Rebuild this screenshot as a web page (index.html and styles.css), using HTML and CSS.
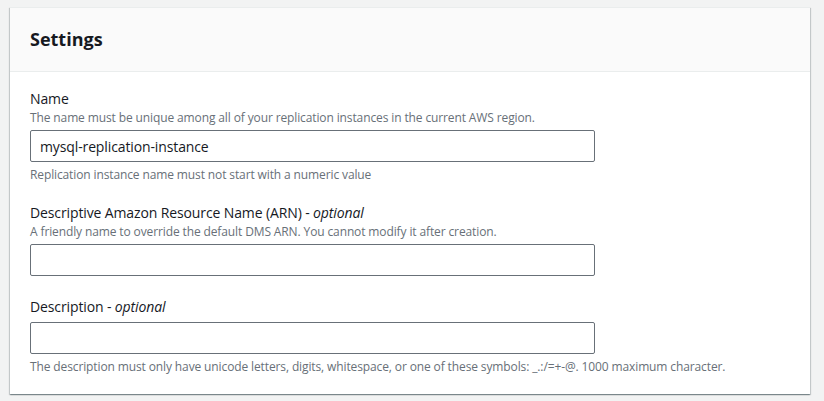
FILE: index.html
```html
<!DOCTYPE html>
<html lang="en">
<head>
<meta charset="utf-8">
<title>Settings</title>
<link rel="stylesheet" href="styles.css">
</head>
<body>
<div class="page">
  <section class="card">
    <header class="card-header">
      <h2 class="card-title">Settings</h2>
    </header>
    <div class="card-body">
      <div class="field">
        <label class="field-label" for="name">Name</label>
        <div class="field-desc">The name must be unique among all of your replication instances in the current AWS region.</div>
        <input class="field-input" id="name" type="text" value="mysql-replication-instance">
        <div class="field-hint">Replication instance name must not start with a numeric value</div>
      </div>
      <div class="field">
        <label class="field-label" for="arn">Descriptive Amazon Resource Name (ARN) - <i>optional</i></label>
        <div class="field-desc">A friendly name to override the default DMS ARN. You cannot modify it after creation.</div>
        <input class="field-input" id="arn" type="text" value="">
      </div>
      <div class="field">
        <label class="field-label" for="desc">Description - <i>optional</i></label>
        <input class="field-input" id="desc" type="text" value="">
        <div class="field-hint">The description must only have unicode letters, digits, whitespace, or one of these symbols: _.:/=+-@. 1000 maximum character.</div>
      </div>
    </div>
  </section>
</div>
</body>
</html>
```
FILE: styles.css
```css
* { box-sizing: border-box; }
html, body {
  margin: 0;
  padding: 0;
  background: #f2f3f3;
  font-family: "Open Sans", "Noto Sans", sans-serif;
  color: #16191f;
  letter-spacing: -0.12px;
}
.page {
  padding: 7px 14px 7px 10px;
}
.card {
  background: #ffffff;
  border-top: 1px solid #eaeded;
  box-shadow: 0 1px 1px 0 rgba(0, 28, 36, 0.3), 1px 1px 1px 0 rgba(0, 28, 36, 0.15), -1px 1px 1px 0 rgba(0, 28, 36, 0.15);
}
.card-header {
  background: #fafafa;
  border-bottom: 1px solid #eaeded;
  padding: 20px 20px 21px;
}
.card-title {
  margin: 0;
  font-size: 18px;
  line-height: 22px;
  font-weight: 700;
  letter-spacing: 0;
}
.card-body {
  padding: 16px 20px 20px;
  display: flex;
  flex-direction: column;
  gap: 20px;
}
.field {
  display: flex;
  flex-direction: column;
}
.field-label {
  font-size: 14px;
  line-height: 22px;
}
.field-desc {
  font-size: 12px;
  line-height: 16px;
  color: #687078;
}
.field-input {
  margin-top: 4px;
  width: 565px;
  height: 32px;
  border: 1px solid #687078;
  border-radius: 2px;
  padding: 0 9px;
  font-family: inherit;
  font-size: 14px;
  letter-spacing: -0.12px;
  color: #16191f;
  background: #fff;
  outline: none;
}
.field-hint {
  margin-top: 5px;
  font-size: 12px;
  line-height: 15px;
  color: #687078;
}
```
